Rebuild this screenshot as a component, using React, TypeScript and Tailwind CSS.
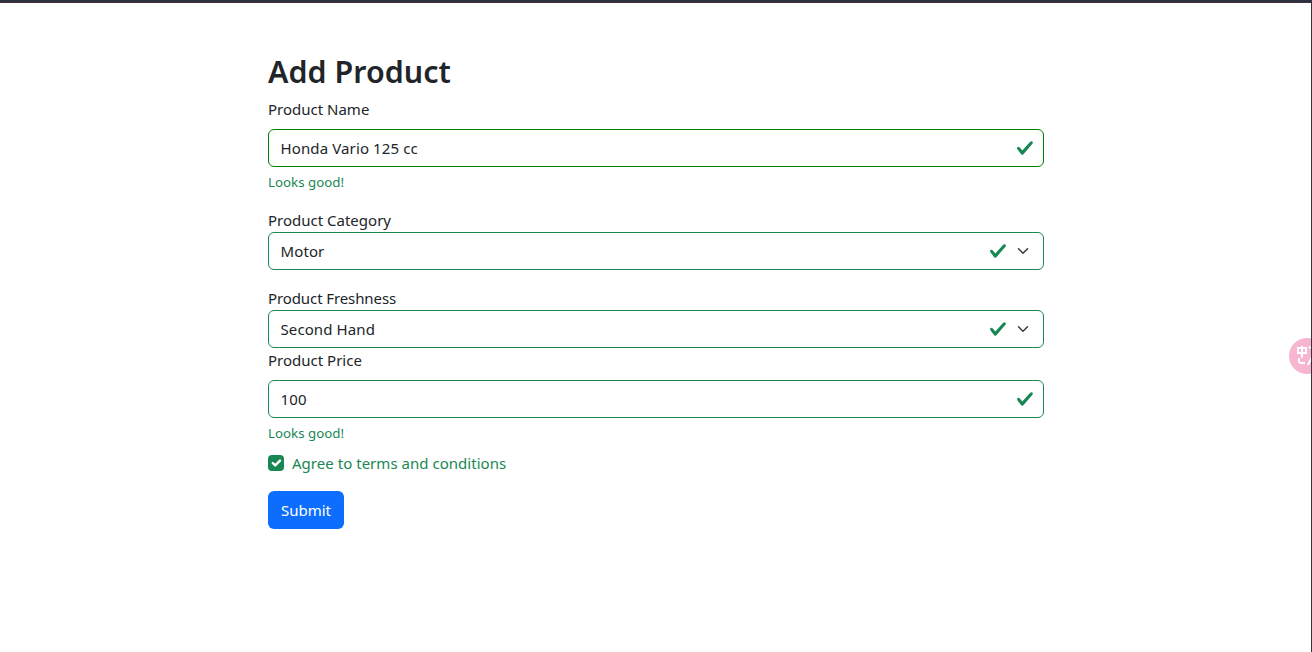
import React from "react";

function ValidMark() {
  return (
    <svg viewBox="0 0 8 8" className="size-[18px] shrink-0" fill="#198754" aria-hidden="true">
      <path d="M2.3 6.73.6 4.53c-.4-1.04.46-1.4 1.1-.8l1.1 1.4 3.4-3.8c.6-.63 1.6-.27 1.2.7l-4 4.6c-.43.5-.8.4-1.1.1z" />
    </svg>
  );
}

function Chevron() {
  return (
    <svg viewBox="0 0 16 16" className="h-3 w-4 shrink-0" fill="none" stroke="#343a40" strokeWidth="2" strokeLinecap="round" strokeLinejoin="round" aria-hidden="true">
      <path d="m2 5 6 6 6-6" />
    </svg>
  );
}

function TextField({ value, className }: { value: string; className: string }) {
  return (
    <div className={`flex h-[38px] items-center rounded-md border bg-white pr-[9px] pl-[11.5px] ${className}`}>
      <input className="min-w-0 flex-1 bg-transparent tracking-[0.12px] outline-none" defaultValue={value} />
      <ValidMark />
    </div>
  );
}

function SelectField({ value }: { value: string }) {
  return (
    <div className="flex h-[38px] items-center rounded-md border border-[#198754] bg-white pr-3 pl-[11.5px]">
      <select className="min-w-0 flex-1 appearance-none bg-transparent tracking-[0.1px] outline-none" defaultValue={value}>
        <option>{value}</option>
      </select>
      <span className="mr-2 flex">
        <ValidMark />
      </span>
      <Chevron />
    </div>
  );
}

function Feedback() {
  return <p className="mt-[5px] text-[13.3px] leading-[21px] text-[#198754]">Looks good!</p>;
}

export default function App() {
  return (
    <div className="relative h-[652px] overflow-hidden border-r border-[#3d3040] bg-white font-['Noto_Sans','Open_Sans',sans-serif] text-[15px] leading-6 text-[#212529]">
      <div className="h-[3px] border-b border-[#44303c] bg-[#2a303c]" />
      <form className="ml-[268px] w-[776px] pt-[50px]">
        <h1 className="mb-[6px] text-[30.4px] leading-[38.4px] font-semibold tracking-[0.04px]">Add Product</h1>
        <label className="mb-2 block">Product Name</label>
        <TextField value="Honda Vario 125 cc" className="border-[green]" />
        <Feedback />
        <label className="mt-[15px] block">Product Category</label>
        <SelectField value="Motor" />
        <label className="mt-4 block tracking-[-0.1px]">Product Freshness</label>
        <SelectField value="Second Hand" />
        <label className="mb-2 block">Product Price</label>
        <TextField value="100" className="border-[#198754]" />
        <Feedback />
        <label className="mt-[7px] flex items-center gap-2 text-[#198754]">
          <span className="flex size-4 rounded bg-[#198754]">
            <svg viewBox="0 0 20 20" className="size-4" fill="none" stroke="#fff" strokeWidth="3" strokeLinecap="round" strokeLinejoin="round" aria-hidden="true">
              <path d="m6 10 3 3 6-6" />
            </svg>
          </span>
          <span className="tracking-[0.03px]">Agree to terms and conditions</span>
        </label>
        <button type="button" className="mt-4 h-[38px] w-[76px] rounded-md bg-[#0d6efd] text-white">Submit</button>
      </form>
      <div className="absolute top-[338px] left-[1289px] size-9 rounded-full bg-[#f7b5d0]">
        <svg viewBox="0 0 36 36" className="size-9" fill="none" stroke="#fff" strokeWidth="2" aria-hidden="true">
          <path d="M9 10h8v5H9zM13 8v11.700M19.500 9.500h6M10 20v3q0 2 2 2H16M22.500 20 19 27" />
        </svg>
      </div>
    </div>
  );
}
